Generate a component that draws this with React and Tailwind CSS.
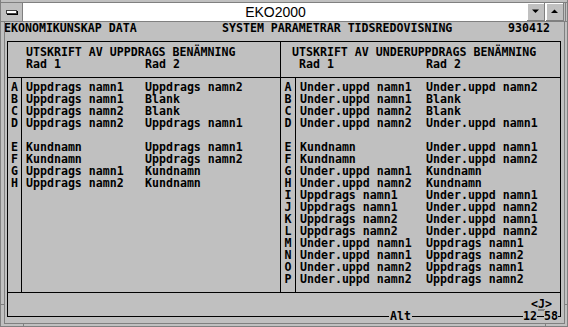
import React from 'react';

const leftRows = [
  ['A', 'Uppdrags namn1', 'Uppdrags namn2'],
  ['B', 'Uppdrags namn1', 'Blank'],
  ['C', 'Uppdrags namn2', 'Blank'],
  ['D', 'Uppdrags namn2', 'Uppdrags namn1'],
  null,
  ['E', 'Kundnamn', 'Uppdrags namn1'],
  ['F', 'Kundnamn', 'Uppdrags namn2'],
  ['G', 'Uppdrags namn1', 'Kundnamn'],
  ['H', 'Uppdrags namn2', 'Kundnamn'],
];

const rightRows = [
  ['A', 'Under.uppd namn1', 'Under.uppd namn2'],
  ['B', 'Under.uppd namn1', 'Blank'],
  ['C', 'Under.uppd namn2', 'Blank'],
  ['D', 'Under.uppd namn2', 'Under.uppd namn1'],
  null,
  ['E', 'Kundnamn', 'Under.uppd namn1'],
  ['F', 'Kundnamn', 'Under.uppd namn2'],
  ['G', 'Under.uppd namn1', 'Kundnamn'],
  ['H', 'Under.uppd namn2', 'Kundnamn'],
  ['I', 'Uppdrags namn1', 'Under.uppd namn1'],
  ['J', 'Uppdrags namn1', 'Under.uppd namn2'],
  ['K', 'Uppdrags namn2', 'Under.uppd namn1'],
  ['L', 'Uppdrags namn2', 'Under.uppd namn2'],
  ['M', 'Under.uppd namn1', 'Uppdrags namn1'],
  ['N', 'Under.uppd namn1', 'Uppdrags namn2'],
  ['O', 'Under.uppd namn2', 'Uppdrags namn1'],
  ['P', 'Under.uppd namn2', 'Uppdrags namn2'],
];

function ArrowButton({ up }) {
  return (
    <div className="w-[18px] h-full bg-[#c0c0c0] border-r border-b border-[#808080] shadow-[inset_1px_1px_0_#ffffff] flex items-center justify-center">
      <svg width="8" height="5" viewBox="0 0 8 5">
        {up ? <polygon points="0,4 7,4 3.5,0.5" fill="#000" /> : <polygon points="0,0.5 7,0.5 3.5,4" fill="#000" />}
      </svg>
    </div>
  );
}

function Half({ rows, letterW, col1W, className }) {
  return (
    <div className={`flex ${className}`}>
      <div className={`${letterW} border-r border-black pt-[3px] flex flex-col items-center`}>
        {rows.map((r, i) => (
          <div key={i} className="h-[12px] leading-[12px]">{r ? r[0] : ''}</div>
        ))}
      </div>
      <div className="flex-1 pl-[4px] pt-[3px] flex flex-col">
        {rows.map((r, i) => (
          <div key={i} className={`h-[12px] leading-[12px] grid ${col1W} whitespace-pre`}>
            <span>{r ? r[1] : ''}</span>
            <span>{r ? r[2] : ''}</span>
          </div>
        ))}
      </div>
    </div>
  );
}

export default function App() {
  return (
    <div className="relative w-[568px] h-[327px] overflow-hidden bg-[#c0c0c0] text-black font-['DejaVu_Sans_Mono',monospace] font-bold text-[11.6px] flex flex-col border-l border-[#808080]">
      {/* title bar */}
      <div className="mt-[2px] h-[20px] border-y border-[#808080] flex font-normal">
        <div className="w-[22px] border-r border-[#808080] flex items-center justify-center">
          <div className="w-[11px] h-[4px] bg-white border border-[#404040] shadow-[1px_1px_0_#000]" />
        </div>
        <div className="flex-1 bg-white flex items-center justify-center font-['Liberation_Sans',Arial,sans-serif] text-[14px] leading-none pl-[2px]">
          EKO2000
        </div>
        <div className="flex gap-[1px] bg-white pl-[1px]">
          <ArrowButton />
          <ArrowButton up />
        </div>
        <div className="w-[3px] border-l border-[#808080] ml-[1px]" />
      </div>

      {/* status line */}
      <div className="h-[12px] leading-[12px] pl-[3px] flex whitespace-pre">
        <span className="w-[218px]">EKONOMIKUNSKAP DATA</span>
        <span className="w-[286px]">SYSTEM PARAMETRAR TIDSREDOVISNING</span>
        <span>930412</span>
      </div>

      {/* main box */}
      <div className="mt-[7px] ml-[6px] w-[554px] h-[276px] border border-black flex flex-col">
        <div className="h-[36px] border-b border-black flex">
          <div className="w-[273px] border-r border-black pt-[4px] pl-[18px]">
            <div className="h-[12px] leading-[12px]">UTSKRIFT AV UPPDRAGS BENÄMNING</div>
            <div className="h-[12px] leading-[12px] grid grid-cols-[119px_1fr]">
              <span>Rad 1</span>
              <span>Rad 2</span>
            </div>
          </div>
          <div className="flex-1 pt-[4px] pl-[11px]">
            <div className="h-[12px] leading-[12px]">UTSKRIFT AV UNDERUPPDRAGS BENÄMNING</div>
            <div className="h-[12px] leading-[12px] grid grid-cols-[127px_1fr] pl-[7px]">
              <span>Rad 1</span>
              <span>Rad 2</span>
            </div>
          </div>
        </div>

        <div className="h-[215px] border-b border-black flex">
          <Half rows={leftRows} letterW="w-[14px]" col1W="grid-cols-[119px_1fr]" className="w-[273px] border-r border-black" />
          <Half rows={rightRows} letterW="w-[15px]" col1W="grid-cols-[126px_1fr]" className="flex-1" />
        </div>

        <div className="flex-1 flex justify-end pr-[8px] pt-[5px]">
          <div className="relative h-[12px] leading-[12px] whitespace-pre">
            &lt;J&gt;
            <div className="absolute left-[7px] top-[11px] w-[7px] h-[2px] bg-[#808080]" />
          </div>
        </div>
      </div>

      {/* labels sitting on the bottom border */}
      <span className="absolute left-[388px] top-[310px] h-[12px] leading-[12px] bg-[#c0c0c0] px-[1px]">Alt</span>
      <span className="absolute left-[522px] top-[310px] h-[12px] leading-[12px] bg-[#c0c0c0]">12</span>
      <span className="absolute left-[543px] top-[310px] h-[12px] leading-[12px] bg-[#c0c0c0]">58</span>

      {/* window frame */}
      <div className="absolute left-[3px] right-[3px] bottom-[3px] h-px bg-[#808080]" />
      <div className="absolute left-0 right-0 bottom-0 h-px bg-[#808080]" />
      <div className="absolute left-[3px] top-[22px] bottom-[3px] w-px bg-[#808080]" />
      <div className="absolute right-[3px] top-[22px] bottom-[3px] w-px bg-[#808080]" />
      <div className="absolute right-0 top-0 bottom-0 w-px bg-[#808080]" />
      <div className="absolute left-[22px] bottom-0 w-px h-[3px] bg-[#808080]" />
      <div className="absolute right-[22px] bottom-0 w-px h-[3px] bg-[#808080]" />
      <div className="absolute left-0 bottom-[22px] w-[3px] h-px bg-[#808080]" />
      <div className="absolute right-0 bottom-[22px] w-[3px] h-px bg-[#808080]" />
    </div>
  );
}
